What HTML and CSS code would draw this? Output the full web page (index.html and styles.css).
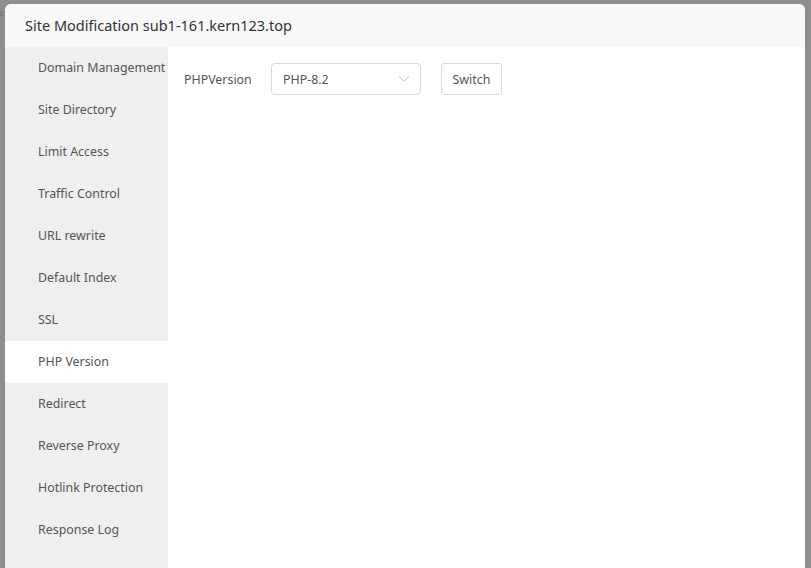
FILE: index.html
```html
<!DOCTYPE html>
<html>
<head>
<meta charset="utf-8">
<link rel="stylesheet" href="styles.css">
</head>
<body>
<div class="backdrop">
  <span class="bg-mark">L</span>
  <div class="dialog">
    <div class="dialog-header">Site Modification sub1-161.kern123.top</div>
    <div class="dialog-body">
      <ul class="side-menu">
        <li>Domain Management</li>
        <li>Site Directory</li>
        <li>Limit Access</li>
        <li>Traffic Control</li>
        <li>URL rewrite</li>
        <li>Default Index</li>
        <li>SSL</li>
        <li class="active">PHP Version</li>
        <li>Redirect</li>
        <li>Reverse Proxy</li>
        <li>Hotlink Protection</li>
        <li>Response Log</li>
      </ul>
      <div class="content">
        <div class="form-row">
          <span class="form-label">PHPVersion</span>
          <div class="select">
            <span>PHP-8.2</span>
            <svg class="chevron" width="12" height="8" viewBox="0 0 12 8"><path d="M1 1.5 L6 6 L11 1.5" fill="none" stroke="#c6c6c6" stroke-width="1"/></svg>
          </div>
          <button class="btn">Switch</button>
        </div>
      </div>
    </div>
  </div>
</div>
</body>
</html>
```
FILE: styles.css
```css
html, body {
  margin: 0;
  padding: 0;
  height: 100%;
  overflow: hidden;
}
body {
  font-family: "Noto Sans", "Open Sans", sans-serif;
  background: #8e8e8e;
}
.backdrop {
  position: relative;
  height: 568px;
  padding: 4px 6px 0 5px;
  box-sizing: border-box;
  overflow: hidden;
}
.bg-mark {
  position: absolute;
  left: 0;
  top: 10px;
  font-size: 7px;
  line-height: 8px;
  color: #3a8a3a;
}
.dialog {
  position: relative;
  background: #fff;
  border-radius: 6px 6px 0 0;
  height: 564px;
  display: flex;
  flex-direction: column;
  overflow: hidden;
}
.dialog-header {
  height: 43px;
  line-height: 43px;
  background: #f8f8f8;
  padding-left: 20px;
  font-size: 14.5px;
  color: #333;
  flex: none;
}
.dialog-body {
  display: flex;
  flex: 1;
}
.side-menu {
  list-style: none;
  margin: 0;
  padding: 0;
  width: 163px;
  background: #efefef;
  flex: none;
}
.side-menu li {
  height: 42px;
  line-height: 42px;
  padding-left: 33px;
  font-size: 12.4px;
  color: #555;
  white-space: nowrap;
}
.side-menu li.active {
  background: #fff;
}
.content {
  flex: 1;
  padding: 16px 16px;
}
.form-row {
  display: flex;
  align-items: center;
}
.form-label {
  font-size: 12.4px;
  color: #555;
  width: 87px;
}
.select {
  height: 30px;
  border: 1px solid #d9d9d9;
  border-radius: 4px;
  display: flex;
  align-items: center;
  justify-content: space-between;
  padding: 0 10px 0 11px;
  box-sizing: content-box;
  font-size: 12.4px;
  color: #555;
  margin-right: 20px;
  width: 127px;
}
.btn {
  height: 32px;
  padding: 0 10.5px;
  border: 1px solid #d9d9d9;
  border-radius: 3px;
  background: #fff;
  font-family: inherit;
  font-size: 12.4px;
  color: #555;
}
```
